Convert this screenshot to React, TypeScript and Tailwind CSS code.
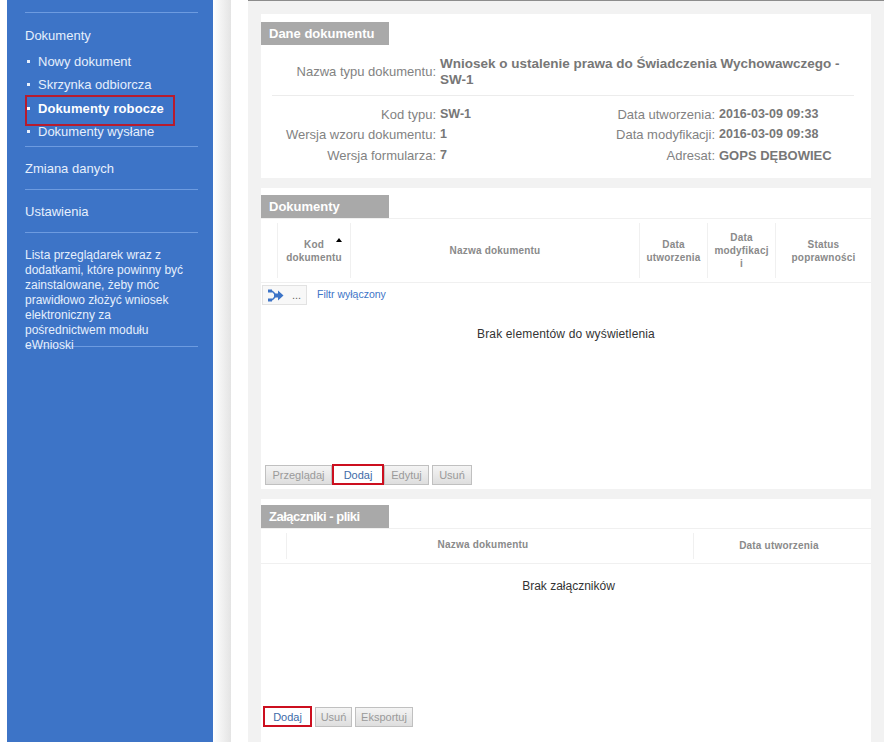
const menuLinks = ["Nowy dokument", "Skrzynka odbiorcza", "Dokumenty robocze", "Dokumenty wysłane"];

const Divider = () => <div className="h-px bg-[#6d9be0]" />;

const Marked = () => <div className="absolute -inset-x-px -top-0.5 -bottom-px border-2 border-[#cc0f1f]" />;

const Sidebar = () => (
  <aside className="ml-[7px] w-[206px] shrink-0 bg-[#3d74c7] pl-[18px] pr-[15px] pt-3 text-[#e6effc]">
    <Divider />
    <h3 className="mt-[15px] h-4 text-[13px] leading-4">Dokumenty</h3>
    <ul className="mt-[5.6px] mb-[2.4px]">
      {menuLinks.map((link) => {
        const active = link === "Dokumenty robocze";
        return (
          <li key={link} className={`relative flex h-[23.5px] items-center text-[13px] ${active ? "font-bold tracking-[0.1px] text-white" : ""}`}>
            <span className="ml-[2px] mr-[8px] size-[3px] bg-current" />
            {link}
            {active && <div className="absolute left-0 top-[-2px] h-[31px] w-[150px] border-2 border-[#b71c2e]" />}
          </li>
        );
      })}
    </ul>
    <Divider />
    <p className="flex h-[42px] items-center pt-[2px] text-[13px]">Zmiana danych</p>
    <Divider />
    <p className="flex h-[42px] items-center pt-[2px] text-[13px]">Ustawienia</p>
    <Divider />
    <p className="mt-[15px] w-[165px] text-xs leading-[15px]">
      Lista przeglądarek wraz z dodatkami, które powinny być zainstalowane, żeby móc prawidłowo złożyć wniosek elektroniczny za pośrednictwem modułu eWnioski
    </p>
    <div className="-mt-[7px]">
      <Divider />
    </div>
  </aside>
);

const PanelTitle = ({ title, tight }: { title: string; tight?: boolean }) => (
  <div className={`flex h-[23px] w-32 shrink-0 items-center whitespace-nowrap bg-[#a9a9a9] px-2 text-[13px] font-bold text-white ${tight ? "tracking-[-0.5px]" : ""}`}>
    {title}
  </div>
);

const Field = ({ label, value, labelWidth, valueSize = "text-[12.5px]" }: { label: string; value: string; labelWidth: string; valueSize?: string }) => (
  <div className="flex h-[20.5px] items-center">
    <span className={`${labelWidth} shrink-0 text-right text-[13px] text-[#828282]`}>{label}</span>
    <span className={`ml-[4px] font-bold text-[#777] ${valueSize}`}>{value}</span>
  </div>
);

const HeadCell = ({ children, extra = "" }: { children?: React.ReactNode; extra?: string }) => (
  <div className={`my-1 flex items-center justify-center border-r border-[#f0f0f0] text-center text-[10px] font-bold leading-[13px] tracking-[0.2px] text-[#8a8a8a] ${extra}`}>
    {children}
  </div>
);

const Btn = ({ label, primary, width, marked }: { label: string; primary?: boolean; width: string; marked?: boolean }) => (
  <div className={`relative flex h-5 ${width} items-center justify-center border border-[#c0c0c0] text-[11px] ${primary ? "bg-white text-[#3d6ba8]" : "bg-linear-to-b from-[#f4f4f4] to-[#dedede] text-[#9a9a9a]"}`}>
    {label}
    {marked && <Marked />}
  </div>
);

const FilterIcon = () => (
  <svg width="16" height="13" viewBox="0 0 16 13">
    <path d="M0 0.5h4v3H0zM0 9.5h4v3H0z" fill="#3d74c7" />
    <path d="M4 2l3 3M4 11l3-3" stroke="#3d74c7" strokeWidth="1.5" fill="none" />
    <path d="M6 4.5h4V1.5l5.5 5-5.5 5V8.5H6z" fill="#3d74c7" />
  </svg>
);

const App = () => (
  <div className="flex h-[742px] w-[889px] overflow-hidden bg-white font-['Liberation_Sans',Arial,sans-serif]">
    <Sidebar />
    <div className="w-[18px] shrink-0 bg-linear-to-r from-white to-[#e4e4e4]" />
    <div className="w-[17px] shrink-0 bg-white" />
    <main className="flex w-[636px] shrink-0 flex-col gap-[10px] border-t border-[#8c8c8c] bg-[#f2f2f2] pl-[13px] pr-[13px] pt-[13px]">
      <section className="h-[164px] bg-white pt-2">
        <PanelTitle title="Dane dokumentu" />
        <div className="ml-[11px] mr-[17px] flex h-[51px] items-center border-b border-[#ececec] pt-[4px]">
          <span className="w-[164px] shrink-0 text-right text-[13px] text-[#828282]">Nazwa typu dokumentu:</span>
          <span className="ml-[4px] w-[410px] text-[13.5px] font-bold leading-4 text-[#777]">
            Wniosek o ustalenie prawa do Świadczenia Wychowawczego - SW-1
          </span>
        </div>
        <div className="mt-[8px] flex">
          <div className="w-[210px]">
            <Field label="Kod typu:" value="SW-1" labelWidth="w-[175px]" />
            <Field label="Wersja wzoru dokumentu:" value="1" labelWidth="w-[175px]" />
            <Field label="Wersja formularza:" value="7" labelWidth="w-[175px]" />
          </div>
          <div>
            <Field label="Data utworzenia:" value="2016-03-09 09:33" labelWidth="w-[244px]" />
            <Field label="Data modyfikacji:" value="2016-03-09 09:38" labelWidth="w-[244px]" />
            <Field label="Adresat:" value="GOPS DĘBOWIEC" labelWidth="w-[244px]" valueSize="text-[13px]" />
          </div>
        </div>
      </section>

      <section className="flex h-[301px] flex-col bg-white pt-[7px]">
        <PanelTitle title="Dokumenty" />
        <div className="grid h-[65px] shrink-0 grid-cols-[17px_73px_289px_68px_68px_1fr] border-y border-[#f0f0f0]">
          <HeadCell />
          <div className="relative my-1 flex items-center justify-center border-r border-[#f0f0f0] text-center text-[10px] font-bold leading-[13px] tracking-[0.2px] text-[#8a8a8a]">
            <span>Kod<br />dokumentu</span>
            <div className="absolute right-2 top-[15px] size-0 border-x-[3.5px] border-b-[4px] border-x-transparent border-b-black" />
          </div>
          <HeadCell>Nazwa dokumentu</HeadCell>
          <HeadCell>Data<br />utworzenia</HeadCell>
          <HeadCell>Data<br />modyfikacj<br />i</HeadCell>
          <HeadCell extra="border-r-0">Status<br />poprawności</HeadCell>
        </div>
        <div className="mt-[2px] flex items-center pl-px">
          <div className="flex h-5 w-[45px] items-center justify-center gap-2 border border-[#e2e2e2] bg-[#f8f8f8] text-[11px] text-[#666]">
            <FilterIcon />
            <span className="leading-none">...</span>
          </div>
          <span className="ml-[10px] text-[10.5px] text-[#3d74c7]">Filtr wyłączony</span>
        </div>
        <p className="mt-[21px] text-center text-xs leading-4 tracking-[0.15px] text-[#333]">Brak elementów do wyświetlenia</p>
        <div className="mt-auto mb-1 flex pl-1">
          <Btn label="Przeglądaj" width="w-[67px]" />
          <Btn label="Dodaj" width="w-[52px]" primary marked />
          <Btn label="Edytuj" width="w-[45px]" />
          <div className="ml-[3px]"><Btn label="Usuń" width="w-10" /></div>
        </div>
      </section>

      <section className="flex flex-1 flex-col bg-white pt-[6px]">
        <PanelTitle title="Załączniki - pliki" tight />
        <div className="grid h-[36px] shrink-0 grid-cols-[26px_407px_1fr] border-y border-[#f0f0f0]">
          <HeadCell />
          <HeadCell extra="pr-[14px] pb-[3px]">Nazwa dokumentu</HeadCell>
          <HeadCell extra="border-r-0 pr-[7px] pb-[2px]">Data utworzenia</HeadCell>
        </div>
        <p className="mt-[14px] pl-[5px] text-center text-xs leading-4 text-[#333]">Brak załączników</p>
        <div className="mt-auto mb-[15px] flex gap-[3px] pl-[2px]">
          <Btn label="Dodaj" width="w-[49px]" primary marked />
          <Btn label="Usuń" width="w-[37px]" />
          <Btn label="Eksportuj" width="w-[58px]" />
        </div>
      </section>
    </main>
  </div>
);

export default App;
